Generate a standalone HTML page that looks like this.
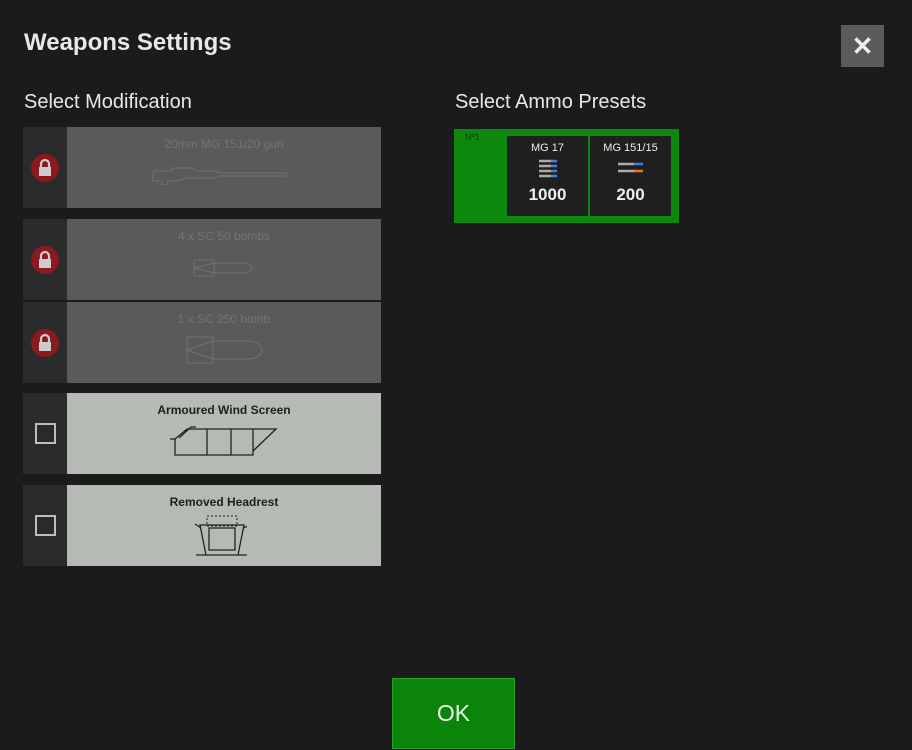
<!DOCTYPE html>
<html><head><style>
body{margin:0;width:912px;height:750px;background:#1b1b1b;font-family:"Liberation Sans",sans-serif;position:relative;overflow:hidden}
.a{position:absolute}
.t{color:#e8e8e8}
.row{position:absolute;left:23px;width:358px;height:81px}
.side{position:absolute;left:0;top:0;width:44px;height:100%;background:#2b2b2b}
.cont{position:absolute;left:44px;top:0;right:0;height:100%}
.lock .cont{background:#585b58}
.on .cont{background:#b5bab4}
.lbl{position:absolute;top:10px;width:100%;text-align:center;font-size:12px}
.lock .lbl{color:#727472}
.on .lbl{color:#1e1e1e;font-weight:bold}
.lk{position:absolute;left:8px;top:27px;width:28px;height:28px;border-radius:50%;background:#8a1a1f}
.cb{position:absolute;left:12px;top:30px;width:17px;height:17px;border:2px solid #bdbdbd;background:#2a2a2a}
.box{position:absolute;top:7px;width:81px;height:80px;background:#1f1f1f;text-align:center;color:#eee}
</style></head><body>
<div class="a t" style="left:24px;top:29px;font-size:24px;font-weight:bold">Weapons Settings</div>
<div class="a" style="left:841px;top:25px;width:43px;height:42px;background:#5b5b5b;color:#eee;font-size:26px;font-weight:bold;text-align:center;line-height:42px">✕</div>
<div class="a t" style="left:24px;top:91px;font-size:20px">Select Modification</div>
<div class="a t" style="left:455px;top:91px;font-size:20px">Select Ammo Presets</div>

<div class="row lock" style="top:127px"><div class="side"><div class="lk"><svg width="28" height="28"><path d="M10 13v-3a4 4 0 0 1 8 0v3" stroke="#ccc" stroke-width="2.2" fill="none"/><rect x="8" y="13" width="12" height="9" fill="#ccc"/></svg></div></div><div class="cont"><div class="lbl">20mm MG 151/20 gun</div>
<svg class="a" style="left:85px;top:36px" width="150" height="22"><path d="M2 8h18v-3h20l4 3h20l3 2h68v3h-68l-3 2h-30l-8 3h-10v3l-6 1v-4h-10z" stroke="#707270" fill="none"/></svg></div></div>
<div class="row lock" style="top:219px"><div class="side"><div class="lk"><svg width="28" height="28"><path d="M10 13v-3a4 4 0 0 1 8 0v3" stroke="#ccc" stroke-width="2.2" fill="none"/><rect x="8" y="13" width="12" height="9" fill="#ccc"/></svg></div></div><div class="cont"><div class="lbl">4 x SC 50 bombs</div>
<svg class="a" style="left:125px;top:38px" width="70" height="22"><path d="M2 3h20v3h30a8 5 0 0 1 0 10h-30v3h-20zM22 6v10M2 11l20-5M2 11l20 5" stroke="#707270" fill="none"/></svg></div></div>
<div class="row lock" style="top:302px"><div class="side"><div class="lk"><svg width="28" height="28"><path d="M10 13v-3a4 4 0 0 1 8 0v3" stroke="#ccc" stroke-width="2.2" fill="none"/><rect x="8" y="13" width="12" height="9" fill="#ccc"/></svg></div></div><div class="cont"><div class="lbl">1 x SC 250 bomb</div>
<svg class="a" style="left:118px;top:33px" width="85" height="30"><path d="M2 2h26v4h35a14 9 0 0 1 0 18h-35v4h-26zM28 6v18M2 15l26-9M2 15l26 9" stroke="#707270" fill="none"/></svg></div></div>
<div class="row on" style="top:393px"><div class="side"><div class="cb"></div></div><div class="cont"><div class="lbl">Armoured Wind Screen</div>
<svg class="a" style="left:102px;top:30px" width="112" height="35"><path d="M6 32v-16l12-10h20v26zM38 6h46v26h-46zM62 6v26M84 6h23l-23 22M10 15l12-11M22 4h5M1 16h6" stroke="#222" stroke-width="1.3" fill="none"/></svg></div></div>
<div class="row on" style="top:485px"><div class="side"><div class="cb"></div></div><div class="cont"><div class="lbl">Removed Headrest</div>
<svg class="a" style="left:125px;top:30px" width="55" height="44"><path d="M15 1h30v10h-30z" stroke="#222" stroke-dasharray="2 2" fill="none"/><path d="M8 10h44l-6 30h-32zM17 13h26v22h-26zM3 9l6 4M52 13l5-3M4 40h52" stroke="#222" stroke-width="1.3" fill="none"/></svg></div></div>

<div class="a" style="left:454px;top:129px;width:225px;height:94px;background:#0c880c">
<div class="a" style="left:11px;top:3px;font-size:9px;color:#0a3d0a">Nº1</div>
<div class="box" style="left:53px"><div style="font-size:11px;margin-top:6px">MG 17</div>
<svg width="30" height="22" style="margin-top:3px"><g stroke-width="2.5"><path d="M6 4h12M6 9h12M6 14h12M6 19h12" stroke="#aaa"/><path d="M18 4h6M18 9h6M18 14h6M18 19h6" stroke="#4a7fd0"/></g></svg>
<div style="font-size:17px;font-weight:bold;margin-top:1px">1000</div></div>
<div class="box" style="left:136px"><div style="font-size:11px;margin-top:6px">MG 151/15</div>
<svg width="30" height="22" style="margin-top:3px"><g stroke-width="2.5"><path d="M2 7h16M2 14h16" stroke="#aaa"/><path d="M18 7h9" stroke="#4a7fd0"/><path d="M18 14h9" stroke="#e07a20"/></g></svg>
<div style="font-size:17px;font-weight:bold;margin-top:1px">200</div></div>
</div>

<div class="a" style="left:392px;top:678px;width:121px;height:69px;background:#0a840a;border:1px solid #2aa02a;color:#e8f5e8;font-size:23px;text-align:center;line-height:69px">OK</div>
</body></html>
